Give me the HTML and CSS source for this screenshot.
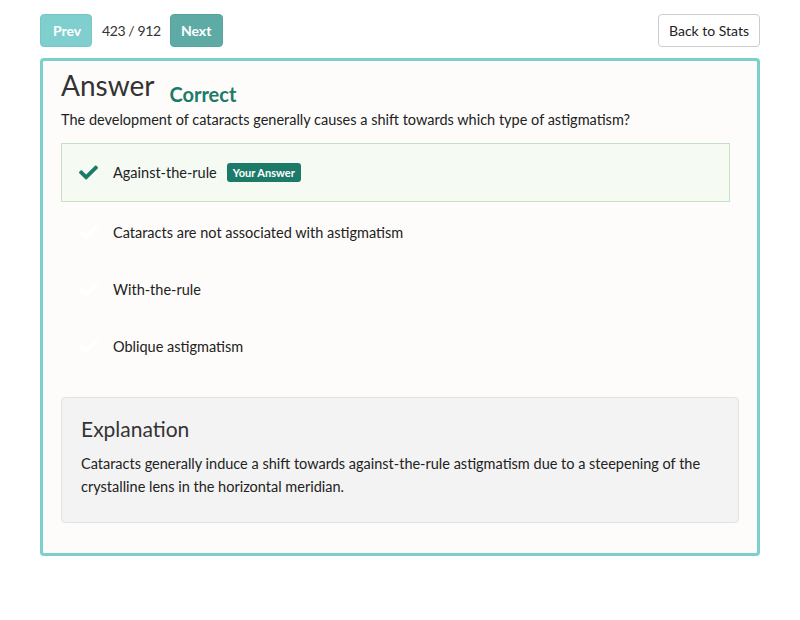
FILE: index.html
```html
<!DOCTYPE html>
<html>
<head>
<meta charset="utf-8">
<link rel="stylesheet" href="styles.css">
</head>
<body>
<div class="page">
  <div class="topbar">
    <button class="btn btn-prev">Prev</button>
    <span class="counter">423 / 912</span>
    <button class="btn btn-next">Next</button>
    <button class="btn btn-back">Back to Stats</button>
  </div>
  <div class="card">
    <div class="head"><span class="title">Answer</span><span class="status">Correct</span></div>
    <p class="question">The development of cataracts generally causes a shift towards which type of astigmatism?</p>
    <ul class="options">
      <li class="option selected">
        <svg class="check" viewBox="0 0 512 512"><path d="M173.9 439.4l-166.4-166.4c-10-10-10-26.2 0-36.2l36.2-36.2c10-10 26.2-10 36.2 0L192 312.7 432.1 72.6c10-10 26.2-10 36.2 0l36.2 36.2c10 10 10 26.2 0 36.2L210.1 439.4c-10 10-26.2 10-36.2 0z"/></svg>
        <span class="opt-text">Against-the-rule</span>
        <span class="badge">Your Answer</span>
      </li>
      <li class="option">
        <svg class="check faint" viewBox="0 0 512 512"><path d="M173.9 439.4l-166.4-166.4c-10-10-10-26.2 0-36.2l36.2-36.2c10-10 26.2-10 36.2 0L192 312.7 432.1 72.6c10-10 26.2-10 36.2 0l36.2 36.2c10 10 10 26.2 0 36.2L210.1 439.4c-10 10-26.2 10-36.2 0z"/></svg>
        <span class="opt-text">Cataracts are not associated with astigmatism</span>
      </li>
      <li class="option">
        <svg class="check faint" viewBox="0 0 512 512"><path d="M173.9 439.4l-166.4-166.4c-10-10-10-26.2 0-36.2l36.2-36.2c10-10 26.2-10 36.2 0L192 312.7 432.1 72.6c10-10 26.2-10 36.2 0l36.2 36.2c10 10 10 26.2 0 36.2L210.1 439.4c-10 10-26.2 10-36.2 0z"/></svg>
        <span class="opt-text">With-the-rule</span>
      </li>
      <li class="option">
        <svg class="check faint" viewBox="0 0 512 512"><path d="M173.9 439.4l-166.4-166.4c-10-10-10-26.2 0-36.2l36.2-36.2c10-10 26.2-10 36.2 0L192 312.7 432.1 72.6c10-10 26.2-10 36.2 0l36.2 36.2c10 10 10 26.2 0 36.2L210.1 439.4c-10 10-26.2 10-36.2 0z"/></svg>
        <span class="opt-text">Oblique astigmatism</span>
      </li>
    </ul>
    <div class="explanation">
      <h2>Explanation</h2>
      <p>Cataracts generally induce a shift towards against-the-rule astigmatism due to a steepening of the crystalline lens in the horizontal meridian.</p>
    </div>
  </div>
</div>
</body>
</html>
```
FILE: styles.css
```css
* { box-sizing: border-box; }
body {
  margin: 0;
  background: #ffffff;
  font-family: Lato, "Open Sans", sans-serif;
  color: #333333;
}
.page {
  padding: 14px 40px;
}
.topbar {
  display: flex;
  align-items: center;
  height: 33px;
}
.btn {
  height: 33px;
  border-radius: 4px;
  font-family: inherit;
  font-size: 14px;
  padding: 0 12px;
  cursor: pointer;
}
.btn-prev {
  width: 52px;
  background: #7fcfcf;
  border: 1px solid #76c6c6;
  color: #ffffff;
  font-weight: bold;
}
.btn-next {
  width: 53px;
  background: #5eaba6;
  border: 1px solid #58a39e;
  color: #ffffff;
  font-weight: bold;
  padding: 0;
}
.counter {
  font-size: 14px;
  letter-spacing: -0.4px;
  margin: 0 9px 0 10px;
  color: #333;
}
.btn-back {
  margin-left: auto;
  width: 102px;
  background: #ffffff;
  border: 1px solid #cccccc;
  color: #222;
  padding: 0;
}
.card {
  margin-top: 11px;
  border: 3px solid #7dcfcc;
  border-radius: 4px;
  background: #fdfcfa;
  padding: 4px 18px 30px 18px;
}
.head {
  height: 40px;
  line-height: 40px;
}
.title {
  font-size: 28px;
  color: #333;
}
.status {
  font-size: 20px;
  font-weight: bold;
  color: #1b7a68;
  margin-left: 15px;
  vertical-align: -6px;
}
.question {
  margin: 5px 0 13px;
  font-size: 14.5px;
  line-height: 20px;
  color: #222;
}
.options {
  list-style: none;
  margin: 0 9px 0 0;
  padding: 0;
}
.option {
  display: flex;
  align-items: center;
  height: 57px;
  padding: 0 16px;
  border: 1px solid transparent;
  font-size: 14.5px;
  color: #222;
}
.option.selected {
  height: 59px;
  margin-bottom: 2px;
  background: #f5faf3;
  border-color: #c8dfc6;
}
.check {
  width: 21px;
  height: 19px;
  fill: #1b7a68;
  margin-right: 14px;
  flex: none;
}
.check.faint {
  fill: #ffffff;
}
.badge {
  margin-left: 10px;
  background: #1b7a68;
  color: #ffffff;
  font-size: 11px;
  font-weight: bold;
  border-radius: 3px;
  padding: 3px 6px;
  line-height: 13px;
}
.explanation {
  margin-top: 22px;
  background: #f3f3f3;
  border: 1px solid #e2e2e2;
  border-radius: 4px;
  padding: 17px 19px 24px;
}
.explanation h2 {
  margin: 0 0 9px;
  font-size: 21px;
  font-weight: normal;
  line-height: 28px;
  color: #333;
}
.explanation p {
  margin: 0;
  font-size: 14.5px;
  line-height: 23px;
  color: #222;
}
```
